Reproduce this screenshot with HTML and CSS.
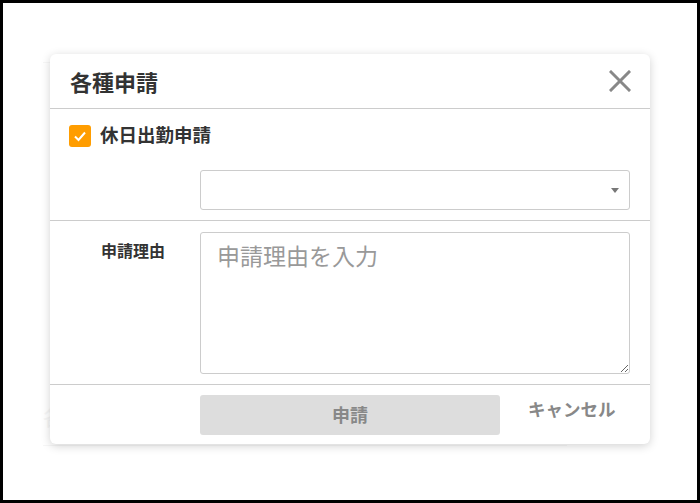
FILE: index.html
```html
<!DOCTYPE html>
<html lang="ja">
<head>
  <meta charset="UTF-8">
  <meta name="viewport" content="width=device-width, initial-scale=1.0">
  <title>各種申請</title>
  <link rel="stylesheet" href="styles.css">
</head>
<body>
  <div class="frame">
    <!-- faint page behind the dialog -->
    <div class="backdrop">
      <div class="bg-line bg-top"></div>
      <div class="bg-line bg-bottom"></div>
      <span class="bg-text">各</span>
    </div>

    <div class="modal">
      <div class="modal-header">
        <h2>各種申請</h2>
        <span class="close">
          <svg width="22" height="22" viewBox="0 0 22 22">
            <path d="M2 2 L20 20 M20 2 L2 20" stroke="#888" stroke-width="3" stroke-linecap="square"/>
          </svg>
        </span>
      </div>

      <div class="modal-body">
        <label class="check-row">
          <span class="checkbox">
            <svg width="14" height="14" viewBox="0 0 14 14">
              <path d="M2 7.5 L5.5 11 L12 3.5" fill="none" stroke="#fff" stroke-width="2"/>
            </svg>
          </span>
          休日出勤申請
        </label>

        <div class="field-row">
          <div class="select">
            <span class="caret"></span>
          </div>
        </div>
      </div>

      <div class="modal-body reason">
        <div class="field-label">申請理由</div>
        <textarea class="textarea" placeholder="申請理由を入力"></textarea>
      </div>

      <div class="modal-footer">
        <button class="submit-btn">申請</button>
        <button class="cancel-btn">キャンセル</button>
      </div>
    </div>
  </div>
</body>
</html>
```

FILE: styles.css
```css
/* Reset and base styles */
* {
  margin: 0;
  padding: 0;
  box-sizing: border-box;
  font-family: "Noto Sans CJK JP", "Noto Sans", sans-serif;
}
body {
  background: #fff;
}

/* Window frame */
.frame {
  position: relative;
  width: 700px;
  height: 503px;
  border: 3px solid #000;
  display: flex;
  justify-content: center;
  padding-top: 51px;
  background: #fff;
  overflow: hidden;
}

/* Faint page behind */
.backdrop {
  position: absolute;
  inset: 0;
  opacity: 0.5;
}
.bg-line {
  position: absolute;
  height: 1px;
  background: #f0f0f0;
}
.bg-top {
  left: 40px;
  right: 70px;
  top: 59px;
}
.bg-bottom {
  left: 40px;
  right: 130px;
  top: 442px;
}
.bg-text {
  position: absolute;
  left: 40px;
  top: 396px;
  font-size: 22px;
  color: #eee;
}

/* Dialog */
.modal {
  position: relative;
  width: 600px;
  height: 390px;
  background: #fff;
  border-radius: 6px;
  box-shadow: 0 2px 10px rgba(0, 0, 0, 0.18);
  display: flex;
  flex-direction: column;
}
.modal-header {
  height: 55px;
  padding: 0 19px 0 20px;
  display: flex;
  align-items: center;
  justify-content: space-between;
  border-bottom: 1px solid #ccc;
}
.modal-header h2 {
  font-size: 22px;
  font-weight: bold;
  color: #333;
  margin-top: -1px;
}
.close {
  display: flex;
  cursor: pointer;
}

.modal-body {
  padding: 15px 20px 10px 19px;
  border-bottom: 1px solid #ccc;
}
.check-row {
  display: flex;
  align-items: center;
  gap: 9px;
  font-size: 18.5px;
  font-weight: bold;
  color: #333;
  height: 23px;
  line-height: 1;
  padding-bottom: 2px;
}
.checkbox {
  width: 22px;
  height: 22px;
  margin-top: 2px;
  background: #ff9d00;
  border-radius: 3px;
  display: flex;
  align-items: center;
  justify-content: center;
}
.field-row {
  margin-top: 23px;
  padding-left: 131px;
}
.select {
  position: relative;
  height: 40px;
  border: 1px solid #ccc;
  border-radius: 3px;
}
.caret {
  position: absolute;
  right: 10px;
  top: 17px;
  border-left: 4.5px solid transparent;
  border-right: 4.5px solid transparent;
  border-top: 5px solid #777;
}

.reason {
  display: flex;
  padding: 11px 20px 10px 51px;
}
.field-label {
  width: 99px;
  padding-top: 6px;
  font-size: 16px;
  font-weight: bold;
  color: #333;
}
.textarea {
  flex: 1;
  height: 142px;
  border: 1px solid #ccc;
  border-radius: 3px;
  padding: 5px 16px;
  font-size: 23px;
  color: #333;
  resize: vertical;
  outline: none;
}
.textarea::placeholder {
  color: #999;
}

.modal-footer {
  display: flex;
  align-items: flex-start;
  padding: 10px 20px 0 150px;
}
.submit-btn {
  width: 300px;
  height: 40px;
  padding-bottom: 3px;
  border: none;
  border-radius: 3px;
  background: #ddd;
  color: #888;
  font-size: 18px;
  font-weight: bold;
}
.cancel-btn {
  margin-left: 28px;
  margin-top: 1px;
  border: none;
  background: none;
  color: #888;
  font-size: 17.5px;
  font-weight: bold;
  cursor: pointer;
}
```
